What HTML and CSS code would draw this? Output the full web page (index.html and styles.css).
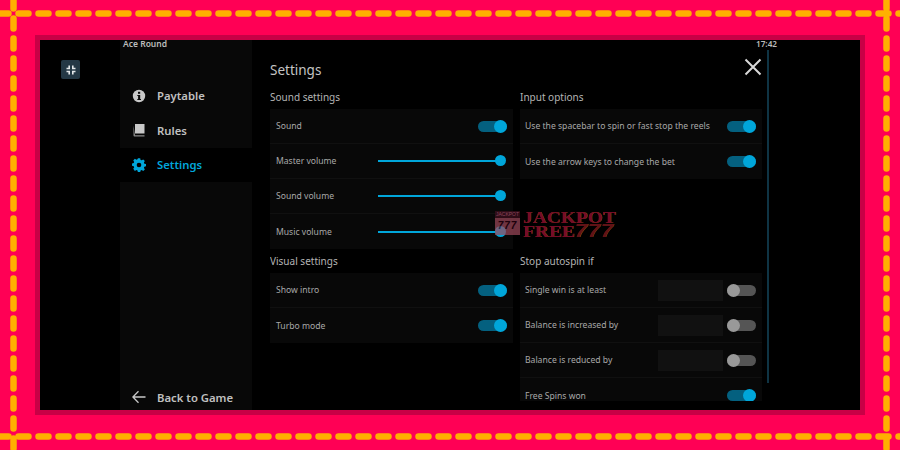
FILE: index.html
```html
<!DOCTYPE html>
<html lang="en">
<head>
    <meta charset="UTF-8">
    <title>Ace Round Settings</title>
    <link rel="stylesheet" href="styles.css">
</head>
<body>
    <svg class="stitches" width="900" height="450">
        <line x1="0" y1="13.500" x2="900" y2="13.500"></line>
        <line x1="0" y1="436.500" x2="900" y2="436.500"></line>
        <line x1="13.500" y1="0" x2="13.500" y2="450"></line>
        <line x1="886.500" y1="0" x2="886.500" y2="450"></line>
    </svg>
    <div class="frame">
        <div class="stage">
            <div class="gutter">
                <button class="shrink">
                    <svg width="12" height="12" viewBox="0 0 12 12"><path d="M4.200 1.500v3H1.500M7.800 1.500v3h2.700M4.200 10.500v-3H1.500M7.800 10.500v-3h2.700" fill="none" stroke="#e4e8ea" stroke-width="1.600"/></svg>
                </button>
            </div>
            <nav class="sidebar">
                <div class="game-name">Ace Round</div>
                <div class="menu">
                    <a class="menu-item">
                        <svg width="14" height="14" viewBox="0 0 14 14"><circle cx="7" cy="7" r="6.200" fill="#c8c8c8"/><rect x="6" y="2.800" width="2.200" height="2" fill="#0a0a0a"/><path d="M5.300 6h2.900v4h.8v1H5.300v-1h.8V7h-.8z" fill="#0a0a0a"/></svg>
                        Paytable
                    </a>
                    <a class="menu-item">
                        <svg width="14" height="14" viewBox="0 0 14 14"><path d="M3 1h9.500v9.500H3z" fill="#c8c8c8"/><path d="M1.500 2.500V12.500q0 1 1 1h10v-1.300H3v-1h-.2z" fill="#8a8a8a"/></svg>
                        Rules
                    </a>
                    <a class="menu-item active">
                        <svg width="14" height="14" viewBox="0 0 14 14"><path d="M5.800.6h2.400l.4 1.800 1.200.5 1.600-1 1.700 1.700-1 1.600.5 1.200 1.800.4v2.400l-1.800.4-.5 1.200 1 1.600-1.700 1.700-1.600-1-1.200.5-.4 1.800H5.800l-.4-1.800-1.200-.5-1.600 1L.9 11.800l1-1.600-.5-1.200L-.4 8.600V6.200l1.800-.4.5-1.200-1-1.600L2.600 1.300l1.600 1 1.200-.5z" fill="#00a6da" transform="translate(.4 -.4) scale(.95)"/><circle cx="7" cy="7" r="2.300" fill="#000"/></svg>
                        Settings
                    </a>
                </div>
                <a class="menu-item back">
                    <svg width="14" height="14" viewBox="0 0 14 14"><path d="M13.500 7H1M6.500 1.200L.9 7l5.600 5.800" fill="none" stroke="#c8c8c8" stroke-width="1.300"/></svg>
                    Back to Game
                </a>
            </nav>
            <main class="content">
                <h1>Settings</h1>
                <div class="columns">
                    <div class="column">
                        <h2>Sound settings</h2>
                        <div class="group">
                            <div class="row"><span>Sound</span><i class="toggle on"></i></div>
                            <div class="row"><span>Master volume</span><i class="slider"></i></div>
                            <div class="row"><span>Sound volume</span><i class="slider"></i></div>
                            <div class="row"><span>Music volume</span><i class="slider"></i></div>
                        </div>
                        <h2>Visual settings</h2>
                        <div class="group">
                            <div class="row"><span>Show intro</span><i class="toggle on"></i></div>
                            <div class="row"><span>Turbo mode</span><i class="toggle on"></i></div>
                        </div>
                    </div>
                    <div class="column">
                        <h2>Input options</h2>
                        <div class="group tall">
                            <div class="row"><span>Use the spacebar to spin or fast stop the reels</span><i class="toggle on"></i></div>
                            <div class="row"><span>Use the arrow keys to change the bet</span><i class="toggle on"></i></div>
                        </div>
                        <h2>Stop autospin if</h2>
                        <div class="group">
                            <div class="row"><span>Single win is at least</span><b class="field"></b><i class="toggle"></i></div>
                            <div class="row"><span>Balance is increased by</span><b class="field"></b><i class="toggle"></i></div>
                            <div class="row"><span>Balance is reduced by</span><b class="field"></b><i class="toggle"></i></div>
                            <div class="row"><span>Free Spins won</span><i class="toggle on"></i></div>
                        </div>
                    </div>
                </div>
            </main>
            <div class="right-bar">
                <div class="clock">17:42</div>
                <svg class="close" width="18" height="18" viewBox="0 0 18 18"><path d="M1.500 1.500l15 15M16.500 1.500l-15 15" stroke="#d8d8d8" stroke-width="2" fill="none"/></svg>
                <div class="scrollbar"></div>
            </div>
        </div>
    </div>
    <div class="watermark">
        <div class="slot"><small>JACKPOT</small><em>777</em></div>
        <div class="brand">JACKPOT<br>FREE<u>777</u></div>
    </div>
</body>
</html>
```

FILE: styles.css
```css
* {
    box-sizing: border-box;
}

body {
    margin: 0;
    width: 900px;
    height: 450px;
    padding: 35px;
    background: #ff0055;
    font-family: "Noto Sans", sans-serif;
    overflow: hidden;
}

.stitches {
    position: absolute;
    top: 0;
    left: 0;
}

.stitches line {
    stroke: #ffb000;
    stroke-width: 6.500;
    stroke-linecap: round;
    stroke-dasharray: 10 10;
    stroke-dashoffset: 1.500;
}

.frame {
    height: 380px;
    border: 5px solid #c80046;
    background: #000;
}

.stage {
    display: flex;
    height: 370px;
}

.gutter {
    width: 80px;
    padding: 20px 0 0 21px;
}

.shrink {
    display: flex;
    align-items: center;
    justify-content: center;
    width: 19px;
    height: 19px;
    padding: 0;
    border: none;
    border-radius: 2px;
    background: #243845;
}

.sidebar {
    display: flex;
    flex-direction: column;
    width: 132px;
    background: #080808;
}

.game-name {
    height: 38.400px;
    padding-left: 3px;
    font-size: 8.500px;
    font-weight: 600;
    line-height: 8px;
    color: #bbb;
}

.menu {
    flex: 1;
}

.menu-item {
    display: flex;
    align-items: center;
    gap: 11px;
    height: 34.600px;
    padding-left: 12px;
    font-size: 11.300px;
    font-weight: 600;
    color: #c0c0c0;
}

.menu-item.active {
    background: #000;
    color: #00a6da;
}

.back {
    margin-bottom: -4px;
    height: 34px;
}

.content {
    width: 515px;
    padding-left: 18px;
}

h1 {
    margin: 0 0 4px;
    padding-top: 19px;
    font-size: 13.500px;
    font-weight: 400;
    line-height: 22px;
    color: #c4c4c4;
}

h2 {
    margin: 0;
    height: 24px;
    font-size: 10px;
    font-weight: 400;
    line-height: 24px;
    color: #b4b4b4;
}

.columns {
    display: flex;
    gap: 7px;
    height: 316px;
    overflow: hidden;
}

.column {
    width: 243px;
}

.column:last-child {
    width: 242px;
}

.column:first-child .row {
    padding-left: 6px;
}

.group {
    background: #080808;
}

.group.tall {
    margin-bottom: 70px;
}

.row {
    display: flex;
    align-items: center;
    justify-content: space-between;
    height: 35px;
    padding: 0 6px 0 5px;
    border-bottom: 1px solid #101010;
    font-size: 8.600px;
    color: #a8a8a8;
}

.row:last-child {
    border-bottom: none;
}

.row span {
    flex: 1;
}

.toggle {
    position: relative;
    width: 29px;
    height: 11px;
    border-radius: 6px;
    background: #555;
}

.toggle::after {
    content: "";
    position: absolute;
    top: -1px;
    left: 0;
    width: 13px;
    height: 13px;
    border-radius: 50%;
    background: #999;
}

.toggle.on {
    background: #04607f;
}

.toggle.on::after {
    left: 16px;
    background: #00a6da;
}

.slider {
    position: relative;
    width: 124px;
    height: 2px;
    margin-right: 5px;
    background: #00a6da;
}

.slider::after {
    content: "";
    position: absolute;
    top: -5px;
    right: -4px;
    width: 11px;
    height: 11px;
    border-radius: 50%;
    background: #00a6da;
}

.field {
    width: 65px;
    height: 21px;
    margin-right: 4px;
    background: #111;
}

.right-bar {
    position: relative;
    width: 40px;
    margin-left: -11px;
}

.clock {
    position: absolute;
    top: 0;
    left: 0;
    font-size: 8.200px;
    font-weight: 600;
    line-height: 8px;
    color: #bbb;
}

.close {
    position: absolute;
    top: 17.500px;
    left: -12.500px;
}

.scrollbar {
    position: absolute;
    top: 10px;
    left: 11px;
    width: 2px;
    height: 333px;
    background: #0f3444;
}

.watermark {
    position: absolute;
    top: 209px;
    left: 495px;
    display: flex;
    gap: 3px;
    opacity: 0.7;
}

.slot {
    width: 25px;
    height: 24px;
    margin-top: 2px;
    background: #a04a5c;
    text-align: center;
    color: #2a0010;
}

.slot small {
    display: block;
    font-family: "Liberation Sans", sans-serif;
    font-size: 5px;
    line-height: 7px;
    background: #40101f;
    color: #c06080;
}

.slot em {
    display: block;
    font-family: "Liberation Sans", sans-serif;
    font-size: 10px;
    font-weight: 700;
    line-height: 16px;
    letter-spacing: 1px;
}

.brand {
    font-family: "Liberation Serif", serif;
    font-size: 16.600px;
    font-weight: 700;
    line-height: 13px;
    padding-top: 2px;
    color: #a81238;
    text-shadow: 0.5px -0.5px 0 #b85a10;
    transform: scaleX(1.170);
    transform-origin: left top;
}

.brand u {
    font-family: "Liberation Sans", sans-serif;
    font-size: 19px;
    font-style: italic;
    text-decoration: none;
    letter-spacing: 0.5px;
    color: #8a1a20;
}
```
